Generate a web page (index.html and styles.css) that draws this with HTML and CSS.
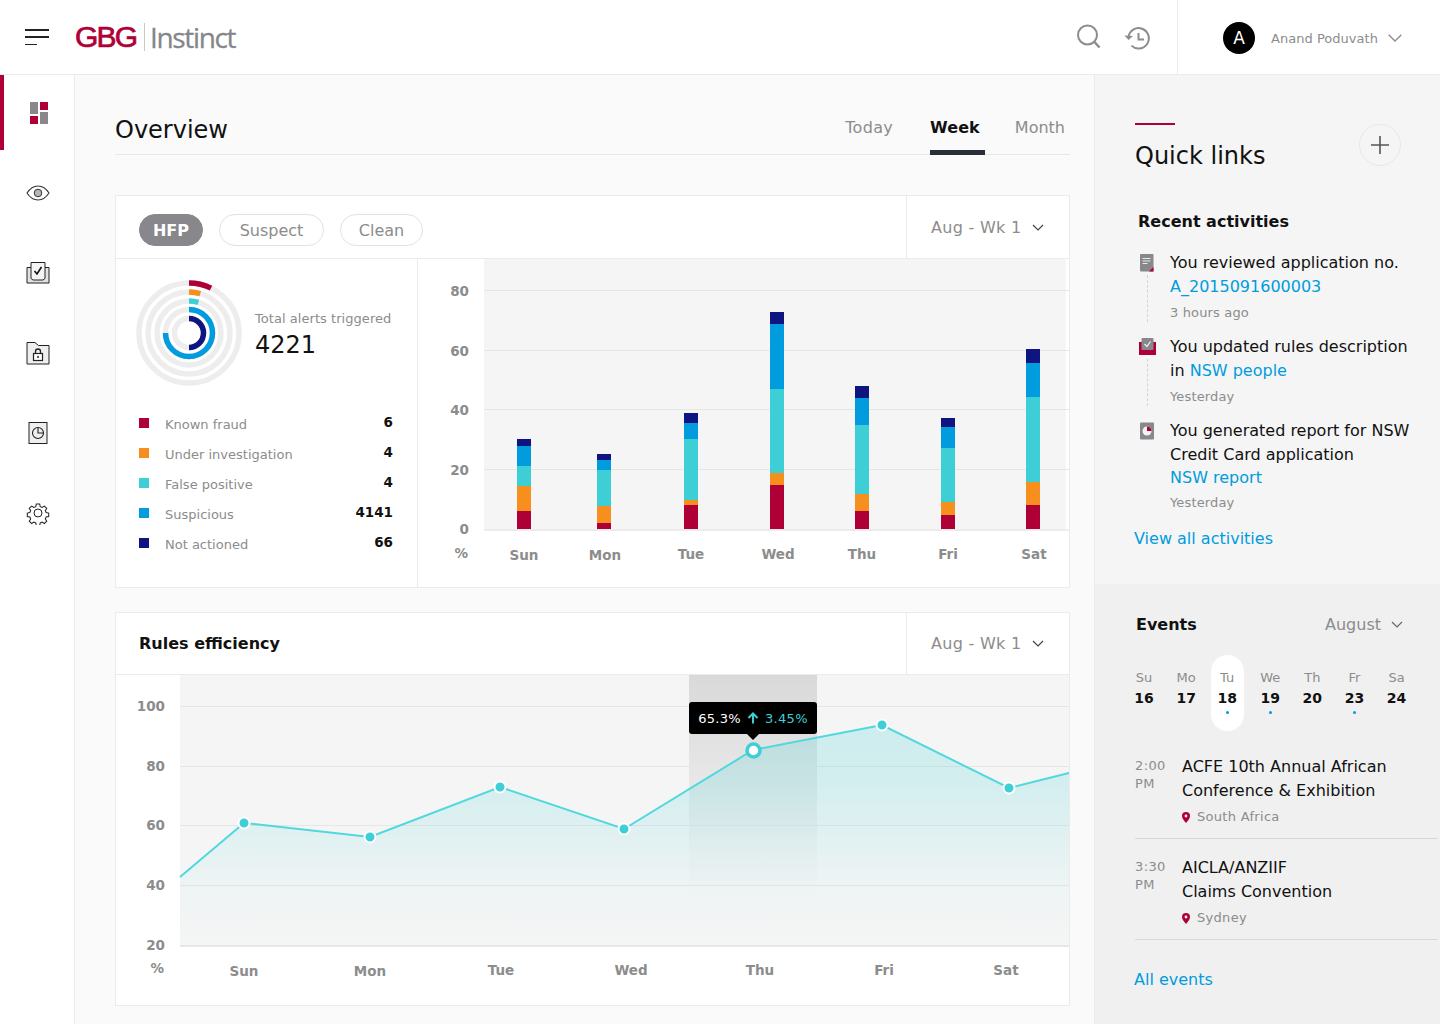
FILE: index.html
```html
<!DOCTYPE html>
<html lang="en">
<head>
<meta charset="utf-8">
<title>GBG Instinct - Overview</title>
<link rel="stylesheet" href="styles.css">
</head>
<body>
<header class="topbar">
  <button class="burger" aria-label="Menu"><span class="b1"></span><span class="b2"></span><span class="b3"></span></button>
  <div class="logo"><span class="logo-gbg">GBG</span><span class="logo-sep"></span><span class="logo-name">Instinct</span></div>
  <div class="top-tools">
    <svg class="tool" width="26" height="26" viewBox="0 0 26 26"><circle cx="11.500" cy="11" r="9.500" fill="none" stroke="#8c8c8c" stroke-width="2"/><path d="M18.500 18l5 5.500" stroke="#8c8c8c" stroke-width="2.400" fill="none"/></svg>
    <svg class="tool tool-hist" width="28" height="26" viewBox="0 0 28 26"><path d="M5.500 11a10.200 10.200 0 1 1 3 8.600" fill="none" stroke="#8c8c8c" stroke-width="2"/><path d="M1.500 9.500l4 4.500 4.500-4z" fill="#8c8c8c"/><path d="M15.500 7v6.500h5.500" fill="none" stroke="#8c8c8c" stroke-width="2"/></svg>
  </div>
  <div class="user">
    <span class="avatar">A</span>
    <span class="user-name">Anand Poduvath</span>
    <svg width="14" height="8" viewBox="0 0 14 8"><path d="M.7.7L7 7l6.300-6.300" fill="none" stroke="#8c8c8c" stroke-width="1.300"/></svg>
  </div>
</header>
<div class="shell">
  <nav class="side">
    <a class="side-item active"><svg width="18" height="22" viewBox="0 0 18 22"><rect x="0" y="0" width="8" height="12" fill="#87878c"/><rect x="10" y="0" width="8" height="8" fill="#ae0037"/><rect x="0" y="14" width="8" height="8" fill="#ae0037"/><rect x="10" y="10" width="8" height="12" fill="#87878c"/></svg></a>
    <a class="side-item"><svg width="24" height="16" viewBox="0 0 24 16"><path d="M1 8c3-4.600 6.800-7 11-7s8 2.400 11 7c-3 4.600-6.800 7-11 7S4 12.600 1 8z" fill="none" stroke="#333" stroke-width="1.100"/><circle cx="12" cy="8" r="3.800" fill="#b5b5b5" stroke="#333" stroke-width="1"/></svg></a>
    <a class="side-item"><svg width="24" height="24" viewBox="0 0 24 24"><path d="M1 6.500h22V22H1z" fill="#e2e2e2" stroke="#222" stroke-width="1"/><path d="M5 17.500V1.500h14v16l-2 1.500H7z" fill="#f4f4f4" stroke="#222" stroke-width="1"/><path d="M8.500 10l2.500 3 4.500-7" fill="none" stroke="#111" stroke-width="1.600"/></svg></a>
    <a class="side-item"><svg width="24" height="24" viewBox="0 0 24 24"><path d="M1 1.500h8l3.500 3H23V23H1z" fill="#efefef" stroke="#222" stroke-width="1"/><rect x="7.500" y="12.500" width="9" height="7" fill="#fff" stroke="#222" stroke-width="1.200"/><path d="M9.500 12.500v-2a2.500 2.500 0 0 1 5 0v2" fill="none" stroke="#222" stroke-width="1.300"/><circle cx="12" cy="16" r="1" fill="#222"/></svg></a>
    <a class="side-item"><svg width="20" height="24" viewBox="0 0 20 24"><rect x="1" y="1.500" width="18" height="21" fill="#efefef" stroke="#222" stroke-width="1"/><circle cx="10" cy="12" r="5.500" fill="none" stroke="#222" stroke-width="1.100"/><path d="M10 6.500V12h5.500" fill="none" stroke="#222" stroke-width="1.100"/></svg></a>
    <a class="side-item"><svg width="24" height="24" viewBox="0 0 24 24"><path d="M10 1.500h4l.6 3 2.300 1 2.600-1.700 2.800 2.800-1.700 2.600 1 2.300 3 .6v4l-3 .6-1 2.300 1.700 2.600-2.800 2.800-2.600-1.700-2.300 1-.6 3h-4l-.6-3-2.300-1-2.600 1.700-2.800-2.800 1.700-2.600-1-2.300-3-.6v-4l3-.6 1-2.300-1.700-2.600 2.800-2.800 2.600 1.700 2.300-1z" transform="translate(1.800 1.800) scale(.85)" fill="none" stroke="#222" stroke-width="1.200"/><circle cx="12" cy="12" r="4" fill="none" stroke="#222" stroke-width="1"/></svg></a>
  </nav>

  <main class="main">
    <div class="overview-head">
      <h1 class="overview-title">Overview</h1>
      <div class="tabs">
        <span class="tab tab-first">Today</span>
        <span class="tab tab-on">Week</span>
        <span class="tab tab-last">Month</span>
      </div>
    </div>

    <section class="card card-alerts">
      <div class="card-head">
        <div class="pills">
          <span class="pill pill-on">HFP</span>
          <span class="pill pill-suspect">Suspect</span>
          <span class="pill pill-clean">Clean</span>
        </div>
        <div class="period"><span>Aug - Wk 1</span><svg width="12" height="7" viewBox="0 0 12 7"><path d="M1 1l5 5 5-5" fill="none" stroke="#444" stroke-width="1.200"/></svg></div>
      </div>
      <div class="alerts-body">
        <div class="alerts-left">
          <div class="total">
            <svg class="rings" width="106" height="106" viewBox="-53 -53 106 106">
              <g fill="none" stroke="#ededed" stroke-width="5.500">
                <circle r="50"/><circle r="41"/><circle r="32"/><circle r="23.500"/><circle r="14.500"/>
              </g>
              <g fill="none" stroke-width="5.500">
                <path d="M0-50A50 50 0 0 1 22-44.900" stroke="#ae0037"/>
                <path d="M0-41A41 41 0 0 1 11.300-39.400" stroke="#f78f1e"/>
                <path d="M0-32A32 32 0 0 1 9.400-30.600" stroke="#3ecfd6"/>
                <path d="M0-23.500A23.500 23.500 0 1 1 -23.500 0" stroke="#009cde"/>
                <path d="M0-14.500A14.500 14.500 0 0 1 0 14.500" stroke="#0f1580"/>
              </g>
            </svg>
            <div class="total-text">
              <div class="total-label">Total alerts triggered</div>
              <div class="total-value">4221</div>
            </div>
          </div>
          <ul class="legend">
            <li><i class="sw c-red"></i><span>Known fraud</span><b>6</b></li>
            <li><i class="sw c-orange"></i><span>Under investigation</span><b>4</b></li>
            <li><i class="sw c-teal"></i><span>False positive</span><b>4</b></li>
            <li><i class="sw c-blue"></i><span>Suspicious</span><b>4141</b></li>
            <li><i class="sw c-navy"></i><span>Not actioned</span><b>66</b></li>
          </ul>
        </div>
        <svg class="chart" width="651" height="328" viewBox="418 259 651 328">
          <rect x="484" y="259" width="582" height="270" fill="#f5f5f5"/>
          <g stroke="#e6e6e6" stroke-width="1"><path d="M484 290.500H1069M484 350.500H1069M484 409.500H1069M484 469.500H1069"/></g>
          <path d="M484 530H1069" stroke="#ececec" stroke-width="2"/>
          <g class="axis axis-end">
            <text x="469" y="296">80</text><text x="469" y="356">60</text><text x="469" y="415">40</text><text x="469" y="475">20</text><text x="469" y="534">0</text><text x="468" y="558">%</text>
          </g>
          <g class="axis axis-mid">
            <text x="524" y="560">Sun</text><text x="605" y="560">Mon</text><text x="691" y="559">Tue</text><text x="778" y="559">Wed</text><text x="862" y="559">Thu</text><text x="948" y="559">Fri</text><text x="1034" y="559">Sat</text>
          </g>
          <g>
            <rect class="f-navy" x="517" y="439" width="14" height="7"/><rect class="f-blue" x="517" y="446" width="14" height="20"/><rect class="f-teal" x="517" y="466" width="14" height="20"/><rect class="f-orange" x="517" y="486" width="14" height="25"/><rect class="f-red" x="517" y="511" width="14" height="18"/>
            <rect class="f-navy" x="597" y="454" width="14" height="6"/><rect class="f-blue" x="597" y="460" width="14" height="10"/><rect class="f-teal" x="597" y="470" width="14" height="36"/><rect class="f-orange" x="597" y="506" width="14" height="17"/><rect class="f-red" x="597" y="523" width="14" height="6"/>
            <rect class="f-navy" x="684" y="413" width="14" height="10"/><rect class="f-blue" x="684" y="423" width="14" height="16"/><rect class="f-teal" x="684" y="439" width="14" height="61"/><rect class="f-orange" x="684" y="500" width="14" height="5"/><rect class="f-red" x="684" y="505" width="14" height="24"/>
            <rect class="f-navy" x="770" y="312" width="14" height="12"/><rect class="f-blue" x="770" y="324" width="14" height="65"/><rect class="f-teal" x="770" y="389" width="14" height="84"/><rect class="f-orange" x="770" y="473" width="14" height="12"/><rect class="f-red" x="770" y="485" width="14" height="44"/>
            <rect class="f-navy" x="855" y="386" width="14" height="12"/><rect class="f-blue" x="855" y="398" width="14" height="27"/><rect class="f-teal" x="855" y="425" width="14" height="69"/><rect class="f-orange" x="855" y="494" width="14" height="17"/><rect class="f-red" x="855" y="511" width="14" height="18"/>
            <rect class="f-navy" x="941" y="418" width="14" height="9"/><rect class="f-blue" x="941" y="427" width="14" height="21"/><rect class="f-teal" x="941" y="448" width="14" height="54"/><rect class="f-orange" x="941" y="502" width="14" height="13"/><rect class="f-red" x="941" y="515" width="14" height="14"/>
            <rect class="f-navy" x="1026" y="349" width="14" height="14"/><rect class="f-blue" x="1026" y="363" width="14" height="34"/><rect class="f-teal" x="1026" y="397" width="14" height="85"/><rect class="f-orange" x="1026" y="482" width="14" height="23"/><rect class="f-red" x="1026" y="505" width="14" height="24"/>
          </g>
        </svg>
      </div>
    </section>

    <section class="card card-rules">
      <div class="card-head card-head-rules">
        <h2 class="rules-title">Rules efficiency</h2>
        <div class="period"><span>Aug - Wk 1</span><svg width="12" height="7" viewBox="0 0 12 7"><path d="M1 1l5 5 5-5" fill="none" stroke="#444" stroke-width="1.200"/></svg></div>
      </div>
      <div class="line-wrap">
        <svg class="chart" width="953" height="330" viewBox="116 675 953 330">
          <defs>
            <linearGradient id="areaFill" gradientUnits="userSpaceOnUse" x1="0" y1="725" x2="0" y2="945"><stop offset="0" stop-color="#3ecfd6" stop-opacity=".22"/><stop offset=".28" stop-color="#3ecfd6" stop-opacity=".18"/><stop offset=".72" stop-color="#3ecfd6" stop-opacity=".04"/><stop offset="1" stop-color="#3ecfd6" stop-opacity="0"/></linearGradient>
            <linearGradient id="bandFill" gradientUnits="userSpaceOnUse" x1="0" y1="675" x2="0" y2="905"><stop offset="0" stop-color="#d9d9d9"/><stop offset=".45" stop-color="#d9d9d9" stop-opacity=".5"/><stop offset=".77" stop-color="#d9d9d9" stop-opacity=".15"/><stop offset="1" stop-color="#d9d9d9" stop-opacity="0"/></linearGradient>
          </defs>
          <rect x="180" y="675" width="889" height="270" fill="#f5f5f5"/>
          <rect x="689" y="675" width="128" height="230" fill="url(#bandFill)"/>
          <path d="M180 706.500H1069M180 766.500H1069M180 825.500H1069M180 885.500H1069" stroke="#e6e6e6"/>
          <path d="M180 877L244 823L370 837L500 787L624 829L753 750L882 725L1009 788L1069 773V945H180z" fill="url(#areaFill)"/>
          <path d="M180 946H1069" stroke="#e6e6e6" stroke-width="2"/>
          <path d="M180 877L244 823L370 837L500 787L624 829L753 750L882 725L1009 788L1069 773" fill="none" stroke="#4fd8dd" stroke-width="2"/>
          <g fill="#3ecfd6" stroke="#fff" stroke-width="2">
            <circle cx="244" cy="823" r="5.500"/><circle cx="370" cy="837" r="5.500"/><circle cx="500" cy="787" r="5.500"/><circle cx="624" cy="829" r="5.500"/><circle cx="882" cy="725" r="5.500"/><circle cx="1009" cy="788" r="5.500"/>
          </g>
          <circle cx="753.500" cy="750.500" r="6.500" fill="#fff" stroke="#3ecfd6" stroke-width="3.500"/>
          <g class="axis axis-end">
            <text x="165" y="711">100</text><text x="165" y="771">80</text><text x="165" y="830">60</text><text x="165" y="890">40</text><text x="165" y="950">20</text><text x="164" y="973">%</text>
          </g>
          <g class="axis axis-mid">
            <text x="244" y="976">Sun</text><text x="370" y="976">Mon</text><text x="501" y="975">Tue</text><text x="631" y="975">Wed</text><text x="760" y="975">Thu</text><text x="884" y="975">Fri</text><text x="1006" y="975">Sat</text>
          </g>
        </svg>
        <div class="tip"><span>65.3%</span><svg width="12" height="12" viewBox="0 0 12 12"><path d="M6 11.500V1.500M1.500 6L6 1.500 10.500 6" fill="none" stroke="#3ecfd6" stroke-width="2"/></svg><span class="tip-up">3.45%</span></div>
      </div>
    </section>
  </main>

  <aside class="aside">
    <section class="links">
      <div class="links-head">
        <h2 class="links-title">Quick links</h2>
        <button class="add" aria-label="Add"><svg width="18" height="18" viewBox="0 0 18 18"><path d="M9 0v18M0 9h18" stroke="#555" stroke-width="1.600"/></svg></button>
      </div>
      <h3 class="recent">Recent activities</h3>
      <ol class="activity">
        <li class="act act-line">
          <svg class="act-icon" width="16" height="18" viewBox="0 0 16 18"><path d="M1 1a1 1 0 0 1 1-1h11.500a1 1 0 0 1 1 1v16.500H2a1 1 0 0 1-1-1z" fill="#87878c"/><path d="M3.500 4.500h8M3.500 7h8M3.500 9.500h5" stroke="#e8e8e8" stroke-width="1.100"/><path d="M14.500 13v4.500H10z" fill="#ae0037"/></svg>
          <p>You reviewed application no.<br><a class="lnk">A_2015091600003</a></p>
          <small>3 hours ago</small>
        </li>
        <li class="act act-line">
          <svg class="act-icon" width="18" height="18" viewBox="0 0 18 18"><rect x="0" y="4" width="17" height="13" fill="#ae0037"/><rect x="2.500" y="0" width="12" height="12" rx="1" fill="#87878c"/><path d="M5.500 6l2.500 2.500 3.500-5" fill="none" stroke="#eee" stroke-width="1.300"/></svg>
          <p>You updated rules description<br>in <a class="lnk">NSW people</a></p>
          <small>Yesterday</small>
        </li>
        <li class="act">
          <svg class="act-icon" width="16" height="18" viewBox="0 0 16 18"><rect x="1" y="0.500" width="14" height="17" rx="1" fill="#87878c"/><circle cx="8" cy="9" r="4.500" fill="#f2f2f2"/><path d="M8 9V4.500A4.500 4.500 0 0 1 12.500 9z" fill="#ae0037"/></svg>
          <p>You generated report for NSW<br>Credit Card application<br><a class="lnk">NSW report</a></p>
          <small>Yesterday</small>
        </li>
      </ol>
      <a class="lnk more">View all activities</a>
    </section>
    <section class="events">
      <div class="events-head">
        <h3 class="events-title">Events</h3>
        <div class="month"><span>August</span><svg width="12" height="7" viewBox="0 0 12 7"><path d="M1 1l5 5 5-5" fill="none" stroke="#666" stroke-width="1.200"/></svg></div>
      </div>
      <div class="days">
        <div class="day"><span>Su</span><b>16</b></div>
        <div class="day"><span>Mo</span><b>17</b></div>
        <div class="day day-on"><span>Tu</span><b>18</b><i class="dot"></i></div>
        <div class="day"><span>We</span><b>19</b><i class="dot"></i></div>
        <div class="day"><span>Th</span><b>20</b></div>
        <div class="day"><span>Fr</span><b>23</b><i class="dot"></i></div>
        <div class="day"><span>Sa</span><b>24</b></div>
      </div>
      <article class="event">
        <div class="event-time">2:00<br>PM</div>
        <div class="event-info">
          <p>ACFE 10th Annual African<br>Conference &amp; Exhibition</p>
          <div class="place"><svg width="8" height="11" viewBox="0 0 8 11"><path d="M4 11C1.500 8 0 6 0 4a4 4 0 0 1 8 0c0 2-1.500 4-4 7z" fill="#ae0037"/><circle cx="4" cy="4" r="1.400" fill="#f0f0f0"/></svg><span>South Africa</span></div>
        </div>
      </article>
      <article class="event">
        <div class="event-time">3:30<br>PM</div>
        <div class="event-info">
          <p>AICLA/ANZIIF<br>Claims Convention</p>
          <div class="place"><svg width="8" height="11" viewBox="0 0 8 11"><path d="M4 11C1.500 8 0 6 0 4a4 4 0 0 1 8 0c0 2-1.500 4-4 7z" fill="#ae0037"/><circle cx="4" cy="4" r="1.400" fill="#f0f0f0"/></svg><span>Sydney</span></div>
        </div>
      </article>
      <a class="lnk all">All events</a>
    </section>
  </aside>
</div>
</body>
</html>
```

FILE: styles.css
```css
* { box-sizing: border-box; }
html, body { margin: 0; padding: 0; }
body {
  font-family: "DejaVu Sans", sans-serif;
  color: #111;
  background: #fff;
  width: 1440px;
  height: 1024px;
  overflow: hidden;
}
h1, h2, h3, p, ul, ol { margin: 0; padding: 0; list-style: none; font-weight: normal; }
svg { display: block; flex: none; }

/* top bar */
.topbar {
  height: 75px;
  display: flex;
  align-items: center;
  border-bottom: 1px solid #ebebeb;
  background: #fff;
}
.burger {
  width: 24px;
  height: 16px;
  margin-left: 25px;
  padding: 0;
  border: 0;
  background: none;
  display: flex;
  flex-direction: column;
  justify-content: space-between;
  align-items: flex-start;
}
.burger span { display: block; height: 1.500px; background: #222; }
.b1, .b2 { width: 24px; }
.b3 { width: 12px; }
.logo { display: flex; align-items: center; margin-left: 26px; }
.logo-gbg {
  font-family: "Liberation Sans", sans-serif;
  font-size: 30px;
  line-height: 30px;
  letter-spacing: -1.800px;
  -webkit-text-stroke: .7px #ae0037;
  color: #ae0037;
  width: 61px;
}
.logo-sep { width: 1px; height: 28px; background: #c8c8c8; margin: 0 5px 0 8px; }
.logo-name {
  font-family: "Open Sans", sans-serif;
  font-size: 28px;
  line-height: 30px;
  letter-spacing: -1.350px;
  -webkit-text-stroke: .3px #85868a;
  color: #85868a;
}
.top-tools {
  margin-left: auto;
  display: flex;
  align-items: center;
  gap: 21px;
  height: 74px;
  padding-right: 26px;
  border-right: 1px solid #ebebeb;
}
.tool-hist { margin-top: 3px; }
.user { display: flex; align-items: center; width: 262px; padding: 2px 0 0 45px; }
.avatar {
  width: 32px;
  height: 32px;
  border-radius: 50%;
  background: #000;
  color: #fff;
  font-size: 17px;
  display: flex;
  align-items: center;
  justify-content: center;
}
.user-name { font-size: 13px; color: #8c8c8c; margin: 0 10px 0 16px; letter-spacing: .03px; }

/* layout */
.shell { display: flex; height: 949px; }
.side {
  width: 75px;
  border-right: 1px solid #ebebeb;
  background: #fff;
}
.side-item {
  height: 80px;
  display: flex;
  align-items: center;
  justify-content: center;
  padding-left: 2px;
}
.side-item.active { height: 75px; margin-bottom: 3px; border-left: 4px solid #ae0037; padding: 0; }
.main {
  width: 1019px;
  background: #fafafa;
  padding: 0 24px 0 40px;
}
.overview-head {
  height: 80px;
  display: flex;
  justify-content: space-between;
  align-items: flex-end;
  border-bottom: 1px solid #e8e8e8;
  margin-bottom: 40px;
}
.overview-title { font-size: 24px; line-height: 30px; padding-bottom: 9px; }
.tabs { display: flex; gap: 30px; padding-right: 5px; }
.tab {
  font-size: 16px;
  line-height: 22px;
  letter-spacing: .3px;
  color: #8c8c8c;
  height: 41px;
  padding: 3px 0 0;
  margin-bottom: -1px;
}
.tab-first { margin-right: 7px; }
.tab-last { letter-spacing: 0; }
.tab-on {
  color: #111;
  font-weight: bold;
  letter-spacing: .1px;
  border-bottom: 5px solid #2a2e38;
  padding: 3px 5px 0 0;
}

/* cards */
.card { background: #fff; border: 1px solid #ebebeb; }
.card-alerts { height: 393px; margin-bottom: 24px; }
.card-rules { height: 394px; }
.card-head {
  height: 63px;
  display: flex;
  align-items: center;
  justify-content: space-between;
  border-bottom: 1px solid #ebebeb;
  padding-left: 23px;
}
.card-head-rules { height: 62px; }
.pills { display: flex; gap: 16px; padding-top: 5px; }
.pill {
  height: 32px;
  border: 1px solid #e2e2e2;
  border-radius: 16px;
  color: #8c8c8c;
  font-size: 16px;
  line-height: 31px;
  text-align: center;
}
.pill-on { width: 64px; background: #87878c; border-color: #87878c; color: #fff; font-weight: bold; }
.pill-suspect { width: 105px; }
.pill-clean { width: 83px; }
.period {
  width: 163px;
  height: 100%;
  border-left: 1px solid #ebebeb;
  padding-left: 24px;
  display: flex;
  align-items: center;
  gap: 10px;
  color: #8c8c8c;
  font-size: 16px;
  letter-spacing: .3px;
}
.alerts-body { display: flex; height: 328px; }
.alerts-left { width: 302px; border-right: 1px solid #ebebeb; padding: 21px 24px 0 20px; }
.total { display: flex; align-items: center; gap: 13px; }
.total-text { padding-top: 6px; white-space: nowrap; }
.total-label { font-size: 13px; letter-spacing: .05px; color: #8c8c8c; line-height: 18px; }
.total-value { font-size: 24px; line-height: 34px; }
.legend { margin: 23px 0 0 3px; }
.legend li {
  height: 30px;
  display: flex;
  align-items: center;
  font-size: 13px;
  color: #8c8c8c;
}
.legend b { margin-left: auto; color: #111; font-size: 13.500px; position: relative; top: -2px; }
.sw { width: 10px; height: 10px; margin-right: 16px; position: relative; top: -1px; }
.c-red { background: #ae0037; }
.c-orange { background: #f78f1e; }
.c-teal { background: #3ecfd6; }
.c-blue { background: #009cde; }
.c-navy { background: #0f1580; }
.f-red { fill: #ae0037; }
.f-orange { fill: #f78f1e; }
.f-teal { fill: #3ecfd6; }
.f-blue { fill: #009cde; }
.f-navy { fill: #0f1580; }
.axis { font-family: "DejaVu Sans", sans-serif; font-size: 13.500px; font-weight: bold; fill: #8c8c8c; }
.axis-end { text-anchor: end; }
.axis-mid { text-anchor: middle; }
.rules-title { font-size: 16px; font-weight: bold; }
.line-wrap { position: relative; height: 330px; }
.tip {
  position: absolute;
  left: 573px;
  top: 27px;
  width: 128px;
  height: 32px;
  border-radius: 3px;
  background: #000;
  color: #fff;
  font-size: 13px;
  letter-spacing: .3px;
  display: flex;
  align-items: center;
  justify-content: center;
  gap: 6px;
}
.tip::after {
  content: "";
  position: absolute;
  left: 58px;
  bottom: -6px;
  border-style: solid;
  border-width: 6px 6px 0;
  border-color: #000 transparent transparent;
}
.tip-up { color: #3ecfd6; }

/* aside */
.aside { width: 346px; background: #f5f5f5; border-left: 1px solid #ebebeb; display: flex; flex-direction: column; }
.links { height: 509px; padding: 48px 0 0 40px; }
.links-head { display: flex; justify-content: space-between; padding-right: 39px; height: 88px; }
.links-title { font-size: 24px; line-height: 30px; border-top: 2px solid transparent; padding-top: 16px; position: relative; height: 60px; }
.links-title::before { content: ""; position: absolute; left: 0; top: -2px; width: 40px; height: 2px; background: #ae0037; }
.add {
  width: 42px;
  height: 42px;
  margin-top: 1px;
  padding: 0;
  border: 1px solid #e8e8e8;
  border-radius: 50%;
  background: #f5f5f5;
  display: flex;
  align-items: center;
  justify-content: center;
}
.recent { font-size: 16px; font-weight: bold; line-height: 22px; margin: 0 0 18px 3px; }
.activity { margin-left: 4px; }
.act { position: relative; padding-left: 31px; font-size: 16px; line-height: 23.500px; }
.act-line::after {
  content: "";
  position: absolute;
  left: 8px;
  top: 24px;
  bottom: 0;
  border-left: 1px dashed #d4d4d4;
}
.act p { color: #111; }
.act small { display: block; font-size: 13px; line-height: 18px; letter-spacing: .15px; color: #8c8c8c; margin: 6px 0 13px; }
.act:last-child small { margin-top: 4px; }
.act-icon { position: absolute; left: 0; top: 3px; z-index: 1; }
.lnk { color: #009cde; }
.more { display: block; font-size: 16px; line-height: 22px; margin: 16px 0 0 -1px; }
.events { flex: 1; background: #f0f0f0; padding: 29px 0 0 40px; }
.events-head { display: flex; justify-content: space-between; align-items: center; padding-right: 37px; margin-bottom: 20px; height: 22px; }
.events-title { font-size: 16px; font-weight: bold; margin-left: 1px; }
.month { display: flex; align-items: center; gap: 10px; color: #8c8c8c; font-size: 16px; }
.days { display: flex; margin-left: -12px; height: 76px; }
.day {
  width: 42.100px;
  height: 76px;
  display: flex;
  flex-direction: column;
  align-items: center;
  padding-top: 14px;
  border-radius: 17px;
  font-size: 13px;
  line-height: 18px;
  color: #8c8c8c;
}
.day b { color: #111; font-size: 14px; line-height: 20px; margin-top: 1px; }
.day-on { background: #fff; width: 33px; margin: 0 5.500px 0 3.500px; }
.dot { width: 3px; height: 3px; border-radius: 50%; background: #009cde; margin-top: 3px; }
.event {
  display: flex;
  margin-right: 2px;
  padding: 17px 0 11px;
  border-bottom: 1px solid #d8d8d8;
  height: 101px;
}
.days + .event { height: 108px; padding-top: 24px; }
.event-time { width: 47px; font-size: 13px; line-height: 18px; letter-spacing: .4px; color: #8c8c8c; padding-top: 2px; }
.event-info p { font-size: 16px; line-height: 24px; }
.place { display: flex; align-items: center; gap: 7px; margin-top: 5px; font-size: 13px; line-height: 18px; letter-spacing: .3px; color: #8c8c8c; }
.all { display: block; font-size: 16px; margin: 30px 0 0 -1px; }
```
